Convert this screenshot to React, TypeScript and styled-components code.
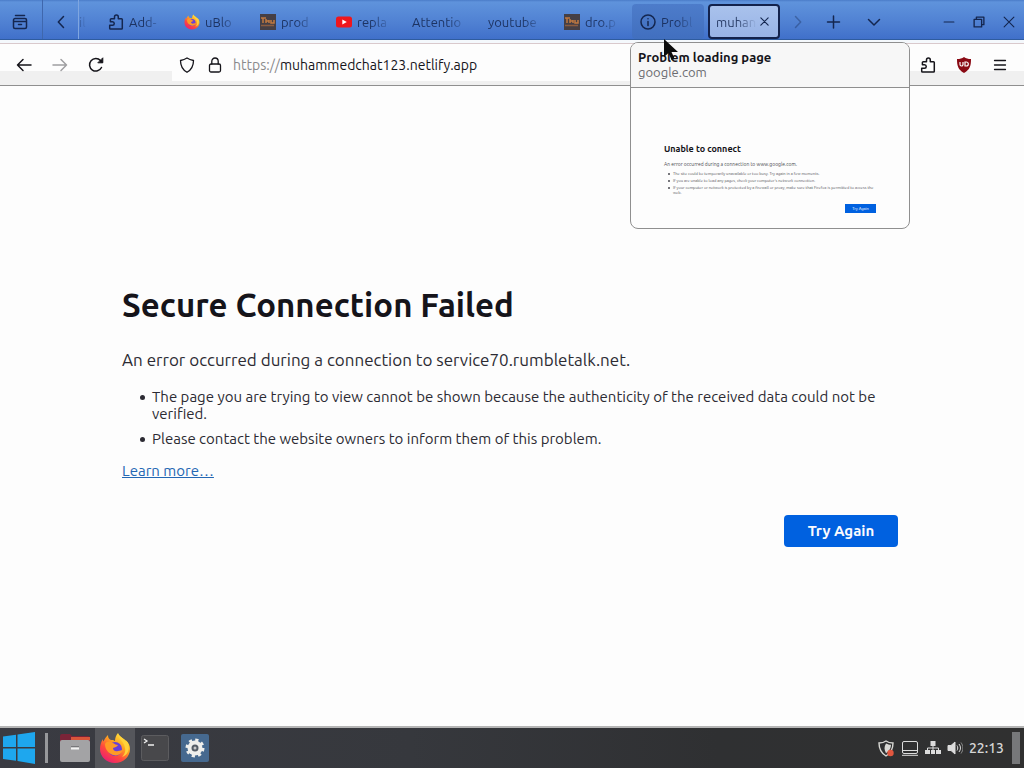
import React, { useState } from "react";
import styled, { createGlobalStyle, css } from "styled-components";

const uiFont = `Ubuntu, "Noto Sans", "Open Sans", sans-serif`;

const GlobalStyle = createGlobalStyle`
  *, *::before, *::after { box-sizing: border-box; }
  body {
    margin: 0;
    font-family: ${uiFont};
    font-size: 13px;
    color: #15141a;
    background: #fdfdfd;
  }
  button, input { font: inherit; color: inherit; }
`;

const Desktop = styled.div`
  display: flex;
  flex-direction: column;
  min-height: 100vh;
`;

/* ---------- tab strip ---------- */

const TabStrip = styled.header`
  display: flex;
  align-items: stretch;
  height: 40px;
  background: linear-gradient(#4a7cc8, #5f93dc 2px, #4f80d2 60%, #4070ca);
  border-bottom: 1px solid #2f5c9f;
  color: #14264f;
`;

const StripButton = styled.button<{ $width: number; $dim?: boolean; $divider?: boolean }>`
  display: flex;
  align-items: center;
  justify-content: center;
  flex: none;
  width: ${(p) => p.$width}px;
  padding: 5px 2px 0 0;
  border: 0;
  border-right: ${(p) => (p.$divider ? "1px solid #3f67ad" : "0")};
  background: none;
  opacity: ${(p) => (p.$dim ? 0.35 : 1)};
`;

const TabScroller = styled.div`
  display: flex;
  flex: 1;
  justify-content: flex-end;
  gap: 4px;
  min-width: 0;
  padding: 4px 4px 0 0;
  overflow: hidden;
  border-left: 1px solid #7fa6e0;
`;

const Tab = styled.button<{ $state?: "active" | "hover" }>`
  display: flex;
  align-items: center;
  gap: 5px;
  flex: none;
  width: 72px;
  height: 35px;
  padding: 0 8px;
  border: 0;
  border-radius: 4px;
  background: none;
  color: #14264f;
  ${(p) =>
    p.$state === "hover" &&
    css`
      background: linear-gradient(#4d7cca, #416fbf);
    `}
  ${(p) =>
    p.$state === "active" &&
    css`
      gap: 3px;
      padding: 0 9px 0 6px;
      border: 2px solid #13224c;
      background: linear-gradient(#a9c2ec, #98b3e6);
    `}
`;

const TabLabel = styled.span`
  flex: 1;
  min-width: 0;
  overflow: hidden;
  white-space: nowrap;
  text-align: left;
  line-height: 20px;
  opacity: 0.85;
  mask-image: linear-gradient(to left, transparent, #000 20px);
`;

/* ---------- navigation toolbar ---------- */

const Toolbar = styled.nav`
  display: flex;
  align-items: center;
  height: 46px;
  padding: 4px 6px 0;
  border-bottom: 1px solid #8f8f8f;
  background: linear-gradient(
    #f4f8fc 3px,
    #d9c9cc 3px,
    #d9c9cc 4px,
    #fdfdfd 4px,
    #fdfdfd 31px,
    #f0f0f0 31px
  );
`;

const ToolButton = styled.button<{ $dim?: boolean }>`
  display: flex;
  align-items: center;
  justify-content: center;
  flex: none;
  width: 36px;
  height: 32px;
  padding: 0;
  border: 0;
  background: none;
  opacity: ${(p) => (p.$dim ? 0.4 : 1)};
`;

const AddressBar = styled.label`
  display: flex;
  align-items: center;
  flex: 1;
  gap: 12px;
  height: 32px;
  margin: 0 32px 0 58px;
  padding: 0 7px;
  background: #fdfdfd;
`;

const AddressField = styled.div`
  position: relative;
  flex: 1;
  margin-left: -2px;
  font-size: 14px;
  line-height: 20px;
`;

const AddressInput = styled.input`
  width: 100%;
  padding: 0;
  border: 0;
  outline: 0;
  background: none;
  color: transparent;
  caret-color: #15141a;
`;

const AddressText = styled.span`
  position: absolute;
  inset: 0;
  pointer-events: none;
  white-space: nowrap;
`;

const Scheme = styled.span`
  color: #8a8a8c;
`;

/* ---------- tab hover preview ---------- */

const Preview = styled.aside`
  position: absolute;
  top: 42px;
  right: 114px;
  width: 280px;
  overflow: hidden;
  border: 1px solid #8f8f8f;
  border-radius: 8px;
  background: #fdfdfd;
`;

const PreviewHead = styled.div`
  padding: 7px;
  border-bottom: 1px solid #8f8f8f;
  background: #f7f7f7;
  line-height: 15px;
`;

const PreviewTitle = styled.div`
  font-weight: 700;
`;

const PreviewHost = styled.div`
  color: #6b6b70;
`;

const Thumbnail = styled.div`
  padding: 54px 33px 15px;
  font-size: 4px;
  line-height: 5px;
  color: #4a4a50;
`;

const ThumbTitle = styled.div`
  font-size: 9px;
  font-weight: 600;
  line-height: 14px;
  color: #15141a;
`;

const ThumbText = styled.p`
  margin: 5px 0 0;
  font-size: 5px;
  line-height: 6px;
`;

const ThumbList = styled.ul`
  margin: 4px 0 0;
  padding-left: 4px;
  list-style: none;
  li {
    display: flex;
    gap: 3px;
    margin-bottom: 2px;
  }
  li::before {
    content: "";
    flex: none;
    width: 2px;
    height: 2px;
    margin-top: 2px;
    border-radius: 50%;
    background: currentColor;
  }
`;

const ThumbButton = styled.div`
  width: 31px;
  height: 9px;
  margin: 9px 0 0 auto;
  background: #0061e0;
  color: #fff;
  line-height: 9px;
  text-align: center;
`;

const Pointer = styled.svg`
  position: absolute;
  top: 38px;
  right: 345px;
`;

/* ---------- error page ---------- */

const Page = styled.main`
  display: flex;
  flex: 1;
  align-items: center;
  justify-content: center;
  padding: 24px 48px 0;
`;

const ErrorPanel = styled.section`
  width: 100%;
  max-width: 780px;
  font-size: 15px;
  line-height: 17px;
`;

const Title = styled.h1`
  margin: 0 0 23px;
  font-size: 33px;
  font-weight: 600;
  line-height: 40px;
`;

const Lead = styled.p`
  margin: 0 0 16px;
  font-size: 17px;
  line-height: 24px;
  color: #2c2b33;
`;

const Reasons = styled.ul`
  margin: 0 0 15px;
  padding: 0 0 0 18px;
  list-style: none;
  color: #2c2b33;
  li {
    display: flex;
    gap: 7px;
  }
  li::before {
    content: "";
    flex: none;
    width: 5px;
    height: 5px;
    margin-top: 7px;
    border-radius: 50%;
    background: currentColor;
  }
  li + li { margin-top: 8px; }
`;

const LearnMore = styled.a`
  color: #2467b3;
  text-decoration: underline;
`;

const Actions = styled.div`
  display: flex;
  justify-content: flex-end;
  padding: 36px 4px 5px;
`;

const RetryButton = styled.button`
  height: 32px;
  min-width: 114px;
  padding: 0 20px;
  border: 0;
  border-radius: 4px;
  background: #0061e0;
  color: #fbfbfe;
  font-weight: 600;
`;

/* ---------- taskbar ---------- */

const Taskbar = styled.footer`
  display: flex;
  align-items: center;
  height: 42px;
  border-top: 2px solid #b5b5b5;
  background: linear-gradient(90deg, #3a3b42, #36383d 40%, #2f3032 70%, #303030);
  color: #d6d6d6;
`;

const TaskButton = styled.button<{ $open?: boolean; $width?: number }>`
  display: flex;
  align-items: center;
  justify-content: center;
  width: ${(p) => p.$width ?? 40}px;
  height: 40px;
  padding: 0;
  border: 0;
  background: ${(p) => (p.$open ? "#55565b" : "none")};
`;

const Divider = styled.span`
  width: 3px;
  height: 30px;
  margin: 0 7px;
  background: #97989b;
`;

const Tray = styled.div`
  display: flex;
  align-items: center;
  gap: 6px;
  margin-left: auto;
`;

const Clock = styled.time`
  font-size: 14px;
  font-weight: 500;
`;

const ShowDesktop = styled.button`
  width: 8px;
  height: 32px;
  margin: 0 4px 0 2px;
  padding: 0;
  border: 0;
  background: #77787a;
`;

/* ---------- icons ---------- */

const Line = ({ d, size = 16, width = 1.5, children }: { d?: string; size?: number; width?: number; children?: React.ReactNode }) => (
  <svg width={size} height={size} viewBox="0 0 16 16" fill="none" stroke="currentColor" strokeWidth={width} strokeLinecap="round" strokeLinejoin="round" aria-hidden="true">
    {d && <path d={d} />}
    {children}
  </svg>
);

const PuzzleIcon = () => (
  <Line d="M2.500 15h11a.8.8 0 0 0 .8-.8V5.600a.8.8 0 0 0-.8-.8h-3.200V3a1.900 1.900 0 0 0-3.800 0v1.800H3.200a.8.8 0 0 0-.8.8v2.200H4.500a1.700 1.700 0 0 1 0 3.500H1.700v2.900a.8.8 0 0 0 .8.800z" />
);

const FirefoxIcon = ({ size }: { size: number }) => (
  <svg width={size} height={size} viewBox="0 0 32 32" aria-hidden="true">
    <defs>
      <linearGradient id="flame" x1="0.85" y1="0.05" x2="0.2" y2="1">
        <stop offset="0" stopColor="#fff044" />
        <stop offset="0.35" stopColor="#ffa51f" />
        <stop offset="0.65" stopColor="#ff4a3c" />
        <stop offset="1" stopColor="#e8187a" />
      </linearGradient>
    </defs>
    <path fill="url(#flame)" d="M19 1c1 3 4 4 6 7 1 1 2 2 2 3 0-1 0-2-.5-3C30 11 31 14 31 17c0 8-7 14-15 14S1 25 1 17c0-4 1-7 3-10 0 1 0 2 .5 2.500C5.500 7 7 5 9 3c0 3 1 4 3 5 2-.2 3 .3 4 1 0-3 1-6 3-8z" />
    <circle cx="16" cy="17" r="7" fill="#6a3fd6" />
    <path fill="#ff9a26" d="M6 12c2-3 5-3 8-1 2 1 3 2 5 2-1 2-3 2-5 3 0 2 2 4 5 3 2 0 3-1 5-1-2 5-7 7-12 4-4-2-6-6-6-10z" />
    <path fill="#ffd23a" d="M19 2c0 5 6 7 7 14 1 4-1 7-3 9 6-2 8-8 6-14-1-2-3-3-4-4-3-2-5-3-6-5z" />
  </svg>
);

const ForumIcon = () => (
  <svg width="16" height="16" viewBox="0 0 16 16" aria-hidden="true">
    <path fill="#453f45" d="M0 0h16v16H0z" />
    <path fill="none" stroke="#c07a40" strokeWidth="1.500" d="M1 4h5M3 4v5M6 5v4M6 7h3M9 6v3M11 6v3h3V6" />
    <path stroke="#8a5c40" strokeWidth="1.500" d="M1 11.500h13" />
  </svg>
);

const YoutubeIcon = () => (
  <svg width="16" height="16" viewBox="0 0 16 16" aria-hidden="true">
    <rect y="2.500" width="16" height="11" rx="2.500" fill="#f0161c" />
    <path fill="#fff" d="M6.300 5.500v5L10.800 8z" />
  </svg>
);

const InfoIcon = () => (
  <Line>
    <circle cx="8" cy="8" r="7" />
    <path d="M8 7.500v4M8 4.700v.1" />
  </Line>
);

const UblockIcon = () => (
  <svg width="16" height="16" viewBox="0 0 16 16" aria-hidden="true">
    <path fill="#8a0a14" d="M8 0c2 1.500 4 2 7 2 0 7-1 10.500-7 14C2 12.500 1 9 1 2c3 0 5-.5 7-2z" />
    <path fill="none" stroke="#fff" strokeWidth="1.200" d="M4 5v2.500a1.500 1.500 0 0 0 3 0V5M9 5v4h1.300a2 2 0 0 0 0-4z" />
  </svg>
);

const WindowsIcon = () => (
  <svg width="32" height="34" viewBox="0 0 32 34" aria-hidden="true">
    <path fill="#1ea7ee" d="M0 5.500l13-1.800V16H0zM14.500 3.500L32 1v15H14.500zM0 17.500h13v12.300L0 28zM14.500 17.500H32V33l-17.500-3z" />
  </svg>
);

const FilesIcon = () => (
  <svg width="32" height="30" viewBox="0 0 32 30" aria-hidden="true">
    <path fill="#7a2438" d="M1 3a2 2 0 0 1 2-2h8l2 2h16a2 2 0 0 1 2 2v5H1z" />
    <path fill="#d9553a" d="M12 4h19v3H12z" />
    <rect x="1" y="7" width="30" height="22" rx="2" fill="#a3a3a5" />
    <path stroke="#f2f2f2" strokeWidth="2" d="M12 15.500h8" />
    <path stroke="#77777a" strokeWidth="1" d="M12 13.500h8" />
  </svg>
);

const TerminalIcon = () => (
  <svg width="28" height="26" viewBox="0 0 28 26" fill="none" aria-hidden="true">
    <rect x="0.5" y="0.5" width="27" height="25" rx="2" fill="#48484b" stroke="#5c5c5f" />
    <path stroke="#f0f0f0" strokeWidth="1.300" d="M3 4l3 2-3 2M7 10h6" />
  </svg>
);

const SettingsIcon = () => (
  <svg width="28" height="28" viewBox="0 0 28 28" aria-hidden="true">
    <rect width="28" height="28" rx="2" fill="#46698f" />
    <circle cx="14" cy="14" r="7.500" fill="#efefec" />
    <circle cx="14" cy="14" r="8" fill="none" stroke="#efefec" strokeWidth="3" strokeDasharray="3.140 3.140" />
    <circle cx="14" cy="14" r="3.500" fill="#555d66" />
    <circle cx="14" cy="14" r="1.500" fill="#c8c8c8" />
  </svg>
);

const TrayIcons = () => (
  <>
    <svg width="17" height="17" viewBox="0 0 17 17" fill="none" role="img" aria-label="Firewall">
      <path stroke="#d8d8d4" strokeWidth="1.400" d="M8 1C6 2.500 4 3 1 3c0 6 2 10 7 13 5-3 7-7 7-13-3 0-5-.5-7-2z" />
      <path fill="#d8d8d4" d="M8 3.500c2 1 3 1.200 5 1.300-.3 4-1.500 6-5 8.500-2-4-2-6 0-9.800z" />
      <circle cx="12.500" cy="13" r="3.200" fill="#e2573f" />
    </svg>
    <svg width="18" height="16" viewBox="0 0 18 16" fill="none" stroke="#dcdcdc" role="img" aria-label="Display">
      <rect x="1.500" y="1.500" width="15" height="12" rx="1.500" />
      <path d="M1.500 10.500h15M1 15.300h16" />
    </svg>
    <svg width="16" height="16" viewBox="0 0 16 16" role="img" aria-label="Network">
      <path fill="#dcdcdc" d="M5.500 1h5v5h-5zM0 10h5v4H0zM6 10h4v4H6zM11 10h5v4h-5z" />
      <path fill="none" stroke="#dcdcdc" d="M8 6v4M2.500 10V8h11v2" />
    </svg>
    <svg width="16" height="16" viewBox="0 0 16 16" fill="none" stroke="#dcdcdc" role="img" aria-label="Volume">
      <path fill="#dcdcdc" d="M1 5.500h3l4-3.500v12l-4-3.500H1z" />
      <path d="M10 5.500c1 1.500 1 3.500 0 5M12 4c2 2.500 2 5.500 0 8" />
      <path stroke="#8c8c8c" d="M14 2.500c2.500 3.500 2.500 7.500 0 11" />
    </svg>
  </>
);

/* ---------- page ---------- */

const tabs: { label: string; icon?: React.ReactNode; state?: "active" | "hover" }[] = [
  { label: "My Gmail" },
  { label: "Add-", icon: <PuzzleIcon /> },
  { label: "uBlo", icon: <FirefoxIcon size={16} /> },
  { label: "prod", icon: <ForumIcon /> },
  { label: "repla", icon: <YoutubeIcon /> },
  { label: "Attentio" },
  { label: "youtube" },
  { label: "dro.p", icon: <ForumIcon /> },
  { label: "Probl", icon: <InfoIcon />, state: "hover" },
  { label: "muhan", state: "active" },
];

export default function App() {
  const [address, setAddress] = useState("https://muhammedchat123.netlify.app");
  const split = address.indexOf("://") + 3;

  return (
    <Desktop>
      <GlobalStyle />
      <TabStrip>
        <StripButton $width={43} $divider aria-label="Firefox View">
          <Line d="M3.500 1.500h9M3 4.500h10a1.500 1.500 0 0 1 1.500 1.500v7a1.500 1.500 0 0 1-1.500 1.500H3a1.500 1.500 0 0 1-1.500-1.500V6A1.500 1.500 0 0 1 3 4.500zM1.500 7.500h13M6.500 10.500h3" />
        </StripButton>
        <StripButton $width={35} aria-label="Scroll tabs back"><Line d="M11.500 2.500L6.300 8l5.200 5.500" /></StripButton>
        <TabScroller>
          {tabs.map((tab) => (
            <Tab key={tab.label} $state={tab.state}>
              {tab.icon}
              <TabLabel>{tab.label}</TabLabel>
              {tab.state === "active" && <Line size={9} width={2} d="M1.500 1.500l13 13M14.500 1.500l-13 13" />}
            </Tab>
          ))}
        </TabScroller>
        <StripButton $width={28} $dim aria-label="Scroll tabs forward"><Line d="M6.500 2.500L11.700 8l-5.200 5.500" /></StripButton>
        <StripButton $width={44} aria-label="New tab"><Line d="M8.500 2v12M2.500 8h12" /></StripButton>
        <StripButton $width={38} aria-label="List all tabs"><Line d="M2.500 5.500L8 11l5.500-5.500" /></StripButton>
        <StripButton $width={41} aria-hidden="true" tabIndex={-1} />
        <StripButton $width={30} aria-label="Minimize"><Line size={12} width={1.5} d="M1.500 8h13" /></StripButton>
        <StripButton $width={30} aria-label="Restore">
          <Line size={12} width={1.8} d="M1.500 4.500h10v10h-10zM4.500 4.500v-3h10v10h-3" />
        </StripButton>
        <StripButton $width={29} aria-label="Close"><Line size={12} width={1.5} d="M1.500 1.500l13 13M14.500 1.500l-13 13" /></StripButton>
      </TabStrip>

      <Toolbar aria-label="Navigation">
        <ToolButton aria-label="Back"><Line d="M15 8H1.500M7 2.500L1.500 8 7 13.500" /></ToolButton>
        <ToolButton $dim aria-label="Forward"><Line d="M1 8h13.500M9 2.500L14.500 8 9 13.500" /></ToolButton>
        <ToolButton aria-label="Reload">
          <Line>
            <path d="M13.500 10.500A6.300 6.300 0 1 1 12.500 3.500l1.500 1.700" />
            <path fill="currentColor" strokeWidth="1" d="M14.800 1.200v4.600h-4.600z" />
          </Line>
        </ToolButton>
        <AddressBar aria-label="Address">
          <Line width={1.3} d="M8 1C6 2.300 4 3 1.500 3.500c0 5.500 1.500 9 6.500 11.800 5-2.800 6.500-6.300 6.500-11.800C12 3 10 2.300 8 1z" />
          <Line width={1.3}>
            <rect x="2.500" y="7" width="11" height="8" rx="1.500" />
            <path d="M4.800 7V4.200a3.200 3.200 0 0 1 6.400 0V7" />
          </Line>
          <AddressField>
            <AddressInput value={address} onChange={(e) => setAddress(e.target.value)} aria-label="Address" />
            <AddressText aria-hidden="true">
              <Scheme>{address.slice(0, split)}</Scheme>
              {address.slice(split)}
            </AddressText>
          </AddressField>
        </AddressBar>
        <ToolButton aria-label="Extensions"><PuzzleIcon /></ToolButton>
        <ToolButton aria-label="uBlock Origin"><UblockIcon /></ToolButton>
        <ToolButton aria-label="Menu"><Line width={1.3} d="M2.500 3.500h11M2.500 8h11M2.500 12.500h11" /></ToolButton>
      </Toolbar>

      <Page>
        <ErrorPanel>
          <Title>Secure Connection Failed</Title>
          <Lead>An error occurred during a connection to service70.rumbletalk.net.</Lead>
          <Reasons>
            <li>The page you are trying to view cannot be shown because the authenticity of the received data could not be verified.</li>
            <li>Please contact the website owners to inform them of this problem.</li>
          </Reasons>
          <LearnMore href="#learn-more">Learn more…</LearnMore>
          <Actions><RetryButton>Try Again</RetryButton></Actions>
        </ErrorPanel>
      </Page>

      <Taskbar>
        <TaskButton $width={38} aria-label="Start"><WindowsIcon /></TaskButton>
        <Divider />
        <TaskButton aria-label="Files"><FilesIcon /></TaskButton>
        <TaskButton $open aria-label="Firefox"><FirefoxIcon size={32} /></TaskButton>
        <TaskButton aria-label="Terminal"><TerminalIcon /></TaskButton>
        <TaskButton aria-label="Settings"><SettingsIcon /></TaskButton>
        <Tray>
          <TrayIcons />
          <Clock>22:13</Clock>
          <ShowDesktop aria-label="Show desktop" />
        </Tray>
      </Taskbar>

      <Preview>
        <PreviewHead>
          <PreviewTitle>Problem loading page</PreviewTitle>
          <PreviewHost>google.com</PreviewHost>
        </PreviewHead>
        <Thumbnail>
          <ThumbTitle>Unable to connect</ThumbTitle>
          <ThumbText>An error occurred during a connection to www.google.com.</ThumbText>
          <ThumbList>
            <li>The site could be temporarily unavailable or too busy. Try again in a few moments.</li>
            <li>If you are unable to load any pages, check your computer’s network connection.</li>
            <li>If your computer or network is protected by a firewall or proxy, make sure that Firefox is permitted to access the web.</li>
          </ThumbList>
          <ThumbButton>Try Again</ThumbButton>
        </Thumbnail>
      </Preview>
      <Pointer width="16" height="24" viewBox="0 0 16 24" aria-hidden="true">
        <path fill="#0c0c0c" d="M1 1v18l4.500-4 3 7 3-1.500-3-6.500H15z" />
      </Pointer>
    </Desktop>
  );
}
